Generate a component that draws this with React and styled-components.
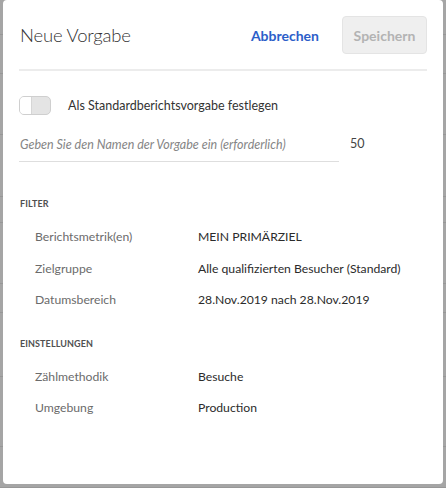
import React from "react";
import styled, { createGlobalStyle } from "styled-components";

const Global = createGlobalStyle`
  html, body { margin: 0; padding: 0; }
  body {
    width: 446px;
    height: 488px;
    overflow: hidden;
    background: #a5a5a5;
    font-family: Lato, "Noto Sans", sans-serif;
  }
`;

const Stage = styled.div`
  position: relative;
  width: 446px;
  height: 488px;
  overflow: hidden;
`;

const Backdrop = styled.div`
  display: flex;
  flex-direction: column;
`;

const BackRow = styled.div`
  height: ${(p) => p.$h}px;
  border-bottom: 1px solid #979797;
  box-sizing: border-box;
`;

const Modal = styled.div`
  position: absolute;
  left: 3px;
  top: 0;
  width: 440px;
  height: 484px;
  background: #fff;
  border-radius: 4px;
  box-sizing: border-box;
  padding: 16px 16px 0 16px;
  display: flex;
  flex-direction: column;
`;

const Header = styled.div`
  display: flex;
  align-items: center;
  height: 38px;
  padding: 0 0 15px 1px;
  border-bottom: 2px solid #ececec;
`;

const Title = styled.h1`
  flex: 1;
  margin: 0;
  font-weight: 300;
  font-size: 18.5px;
  color: #333;
  letter-spacing: -0.2px;
`;

const LinkButton = styled.button`
  background: none;
  border: none;
  font-family: inherit;
  font-size: 14px;
  font-weight: 700;
  color: #2c5ec9;
  padding: 0;
  margin-right: 23px;
`;

const SaveButton = styled.button`
  width: 85px;
  height: 38px;
  background: #efefef;
  border: 1px solid #e4e4e4;
  border-radius: 4px;
  font-family: inherit;
  font-size: 14px;
  font-weight: 700;
  color: #b3b3b3;
`;

const ToggleRow = styled.div`
  display: flex;
  align-items: center;
  gap: 17px;
  margin-top: 25px;
`;

const Track = styled.div`
  width: 32px;
  height: 19px;
  box-sizing: border-box;
  border: 1px solid #cfcfcf;
  border-radius: 5px;
  background: #e4e4e4;
  display: flex;
`;

const Knob = styled.div`
  width: 11px;
  height: 17px;
  background: #fff;
  border-radius: 4px 0 0 4px;
  border-right: 1px solid #d6d6d6;
`;

const Label = styled.span`
  font-size: 12.5px;
  color: #333;
`;

const InputRow = styled.div`
  display: flex;
  align-items: flex-end;
  margin-top: 11px;
`;

const Input = styled.input`
  width: 320px;
  height: 36px;
  box-sizing: border-box;
  border: none;
  border-bottom: 1px solid #dedede;
  padding: 3px 0 2px 1px;
  font-family: inherit;
  font-size: 12.5px;
  outline: none;
  &::placeholder {
    font-style: italic;
    color: #858585;
  }
`;

const Counter = styled.span`
  font-size: 12.5px;
  color: #444;
  margin: 0 0 11px 11px;
`;

const Section = styled.div`
  margin-top: ${(p) => p.$mt}px;
  display: flex;
  flex-direction: column;
`;

const SectionTitle = styled.div`
  font-size: 9px;
  font-weight: 700;
  color: #505050;
  letter-spacing: 0.1px;
  padding-left: 1px;
  margin-bottom: 12px;
`;

const Row = styled.div`
  display: grid;
  grid-template-columns: 163px 1fr;
  height: 31.5px;
  align-items: center;
  padding-left: 16px;
  font-size: 12.2px;
`;

const Key = styled.span`
  color: #6b6b6b;
`;

const Val = styled.span`
  color: #2b2b2b;
`;

const backRows = [35, 39, 61, 62, 26, 61, 29, 64, 70, 41];

export default function App() {
  return (
    <Stage>
      <Global />
      <Backdrop>
        {backRows.map((h, i) => (
          <BackRow key={i} $h={h} />
        ))}
      </Backdrop>
      <Modal>
        <Header>
          <Title>Neue Vorgabe</Title>
          <LinkButton>Abbrechen</LinkButton>
          <SaveButton>Speichern</SaveButton>
        </Header>
        <ToggleRow>
          <Track>
            <Knob />
          </Track>
          <Label>Als Standardberichtsvorgabe festlegen</Label>
        </ToggleRow>
        <InputRow>
          <Input placeholder="Geben Sie den Namen der Vorgabe ein (erforderlich)" />
          <Counter>50</Counter>
        </InputRow>
        <Section $mt={36}>
          <SectionTitle>FILTER</SectionTitle>
          <Row>
            <Key>Berichtsmetrik(en)</Key>
            <Val>MEIN PRIMÄRZIEL</Val>
          </Row>
          <Row>
            <Key>Zielgruppe</Key>
            <Val>Alle qualifizierten Besucher (Standard)</Val>
          </Row>
          <Row>
            <Key>Datumsbereich</Key>
            <Val>28.Nov.2019 nach 28.Nov.2019</Val>
          </Row>
        </Section>
        <Section $mt={22}>
          <SectionTitle>EINSTELLUNGEN</SectionTitle>
          <Row>
            <Key>Zählmethodik</Key>
            <Val>Besuche</Val>
          </Row>
          <Row>
            <Key>Umgebung</Key>
            <Val>Production</Val>
          </Row>
        </Section>
      </Modal>
    </Stage>
  );
}
